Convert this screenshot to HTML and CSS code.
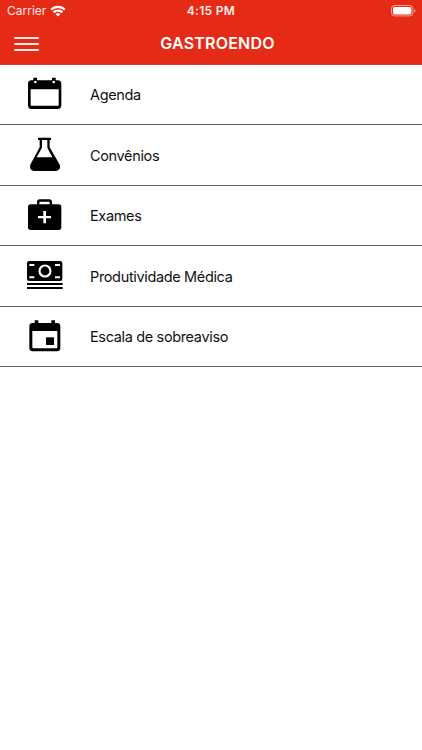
FILE: index.html
```html
<!DOCTYPE html>
<html lang="pt-BR">
<head>
<meta charset="utf-8">
<meta name="viewport" content="width=device-width, initial-scale=1">
<title>GASTROENDO</title>
<link rel="stylesheet" href="styles.css">
</head>
<body>
<header class="header">
  <div class="status">
    <div class="carrier"><span class="carrier-name">Carrier</span>
      <svg class="wifi" viewBox="0 0 16 12"><g fill="none" stroke="#fff" stroke-width="2.2"><path d="M1.2 4.7a9.6 9.6 0 0 1 13.6 0"/><path d="M3.7 7.4a6.1 6.1 0 0 1 8.6 0"/></g><path fill="#fff" d="M8 11.6 5.6 9.2a3.4 3.4 0 0 1 4.8 0z"/></svg>
    </div>
    <time class="time">4:15 PM</time>
    <svg class="battery" viewBox="0 0 25 12"><rect x=".5" y=".5" width="21.4" height="10.4" rx="3" fill="none" stroke="#fff" stroke-opacity=".55"/><rect x="2" y="2" width="18.4" height="7.4" rx="1.6" fill="#fff"/><path d="M23.3 4v3.6q1.3-.6 1.3-1.8T23.3 4z" fill="#fff" fill-opacity=".6"/></svg>
  </div>
  <div class="bar">
    <button class="menu" aria-label="Menu"><span></span><span></span><span></span></button>
    <h1 class="title">GASTROENDO</h1>
  </div>
</header>
<nav class="list">
  <a class="row"><svg class="icon" viewBox="0 -3 180 180"><path fill-rule="evenodd" d="M49 43h6v-8h11v8h45v-8h11v8h6q11 0 11 11v64q0 11-11 11H49q-10 0-10-11V54q0-11 10-11zM47 70v46q0 3 3 3h78q3 0 3-3V70z"/><circle cx="61" cy="48" r="4" fill="#fff"/><circle cx="116" cy="48" r="4" fill="#fff"/></svg><span class="label">Agenda</span></a>
  <a class="row"><svg class="icon" viewBox="0 -5 180 180"><path fill-rule="evenodd" d="M69 33h39v7h-4v22l29 50q6 12-3 18-3 3-9 3H58q-8 0-12-7-3-6 1-14l27-50V40h-5zM81 40v23L65 92h47L97 63V40z"/></svg><span class="label">Convênios</span></a>
  <a class="row"><svg class="icon" viewBox="0 -1 180 180"><path fill-rule="evenodd" d="M66 54V47q0-8 8-8h29q8 0 8 8v7h20q8 0 8 8v61q0 8-8 8H47q-8 0-8-8V62q0-8 8-8zM73 54h31v-5q0-3-3-3H76q-3 0-3 3zM85 74v15H69v7h16v15h8V96h15v-7H93V74z"/></svg><span class="label">Exames</span></a>
  <a class="row"><svg class="icon" viewBox="0 0 180 180"><rect x="36" y="45" width="106" height="60" rx="7"/><circle cx="90" cy="75" r="16.5" fill="none" stroke="#fff" stroke-width="6.5"/><path d="M43 54h15v6H43zM120 54h15v6h-15zM43 91h15v6H43zM120 91h15v6h-15z" fill="#fff"/><path d="M36 111h107v6H36zM36 123h107v6H36z"/></svg><span class="label">Produtividade Médica</span></a>
  <a class="row"><svg class="icon" viewBox="0 2 180 180"><path fill-rule="evenodd" d="M53 50h6v-8h11v8h39v-8h11v8h6q10 0 10 10v65q0 10-10 10H53q-10 0-10-10V60q0-10 10-10zM52 74v49q0 3 3 3h69q3 0 3-3V74z"/><path d="M93 93h24v23H93z"/></svg><span class="label">Escala de sobreaviso</span></a>
</nav>
</body>
</html>
```
FILE: styles.css
```css
* { box-sizing: border-box; }
body { margin: 0; background: #fff; color: #111; font-family: Inter, "Liberation Sans", sans-serif; }
.header { height: 65px; background: #e52b15; color: #fff; border-bottom: 1px solid #c94435; }
.status { height: 22px; display: grid; grid-template-columns: 1fr auto 1fr; align-items: center; padding: 0 6px 0 7px; }
.carrier { display: flex; align-items: center; gap: 4px; }
.carrier-name { font-size: 12px; opacity: .9; margin-top: -1px; }
.wifi { width: 16px; height: 12px; margin-top: -1px; }
.time { font-size: 12px; font-weight: 600; letter-spacing: .3px; opacity: .93; margin: -1px 1px 0 0; }
.battery { width: 25px; height: 12px; justify-self: end; margin-top: -1px; }
.bar { height: 42px; display: grid; grid-template-columns: 60px 1fr 60px; align-items: center; }
.menu { display: flex; flex-direction: column; gap: 4px; width: 25px; margin: 2px 0 0 14px; padding: 0; border: 0; background: none; }
.menu span { height: 2px; border-radius: 1px; background: #fff; opacity: .9; }
.title { margin: 0 -1px 0 12px; text-align: center; font-size: 16px; font-weight: 600; line-height: 20px; letter-spacing: .2px; }
.row { display: flex; align-items: center; height: 60.45px; padding-left: 15px; border-bottom: 1px solid #626262; }
.icon { width: 60px; height: 60px; flex: none; align-self: flex-start; }
.label { margin: 1px 0 0 15px; font-size: 14.5px; line-height: 20px; letter-spacing: -.35px; }
```
